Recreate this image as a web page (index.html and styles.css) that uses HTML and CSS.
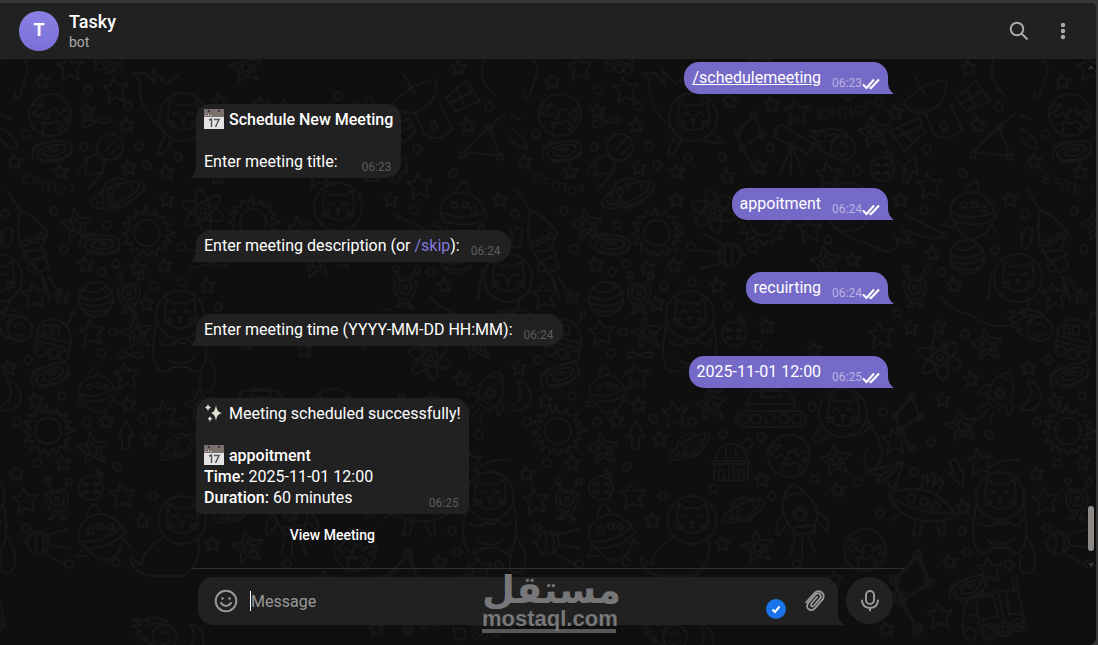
FILE: index.html
```html
<!DOCTYPE html>
<html lang="en">
<head>
    <meta charset="UTF-8">
    <meta name="viewport" content="width=device-width, initial-scale=1.0">
    <title>Tasky</title>
    <link rel="stylesheet" href="styles.css">
</head>
<body>
    <div class="window">
        <!-- space doodles behind the chat -->
        <svg class="wallpaper" aria-hidden="true">
            <defs>
                <path id="star" d="M-2-8L1-3L7-3L3 1L5 7L0 4L-5 7L-4 1L-8-2L-3-3Z"/>
                <path id="bigStar" d="M-3-13L2-5L12-6L6 2L9 11L0 7L-8 13L-6 2L-13-4L-5-5Z"/>
                <g id="doubleStar"><path d="M-3-16L3-7L15-7L7 2L12 13L1 8L-7 15L-7 4L-16-2L-6-5Z"/><path d="M-1-7L2-2L7-2L3 1L5 6L0 4L-4 6L-3 1L-7-1L-3-2Z"/></g>
                <circle id="dot" r="4"/>
                <g id="earth"><circle r="21"/><path d="M-18-9L-8-11L-13-5L-18-2L-13 2L-8-2L-2 4L-1-4L6-6L9 0L15-5L19-2M-8 18L-6 11L-9 8L-4 7L1 9L6 6L13 11L9 14L11 18M14 3l3-2 1 4-3 1z"/></g>
                <g id="banded"><circle r="17"/><path d="M-14-10Q0-2 10-13M-17-3Q0 6 16-6M-17 4Q2 11 17 1M-13 10Q3 16 14 9"/></g>
                <g id="sun"><circle r="13"/><path d="M0-18L-1-27L-5-18L-11-22L-12-15L-20-16L-16-9L-24-10L-18-3L-25 1L-18 4L-23 11L-15 10L-17 19L-10 15L-8 23L-4 18L1 24L4 18L10 22L11 15L20 18L16 9L23 8L18 3L28 0L18-4L23-9L16-10L19-17L11-15L9-22L5-18Z"/></g>
                <g id="galaxy"><path d="M-19 6C-25-5-5-11 12-9C24-7 21 5 9 8C-3 11-16 8-15 2C-14-4 2-7 11-5C18-3 13 3 4 5C-4 6-11 4-7 0C-4-3 3-3 7-1M-19-4q4-5 12-6M-12 10Q10 13 20 3M0 0q3 2 5 0"/></g>
                <g id="saturn"><path d="M-16 3C-17-10-9-17 2-16C13-15 17-8 15 1"/><ellipse rx="28" ry="10"/><path d="M-22-1Q-18 8 3 6Q22 4 23-3M-9 10Q3 17 14 8"/><circle cx="-6" cy="-5" r="3"/><circle cx="3" cy="-9" r="2"/><circle cx="-9" cy="2" r="2"/></g>
                <g id="alien"><path d="M-10-9Q0-16 10-9Q13-3 8 6L4 13L8 17M-10-9Q-13-3-8 6L-4 13L-9 17H-3L-2 13H2L4 18H8M-6-12L-9-19M6-12L10-18M-3 8L0 11L3 7"/><circle r="7" cy="-3"/><circle r="2" cy="-3"/><circle r="3" cx="-9" cy="-21"/><circle r="3" cx="12" cy="-20"/></g>
                <g id="catHead"><circle r="24"/><path d="M-15-3L-13-17L-6-11Q0-14 7-11L14-17L16-2Q16 12 0 13Q-15 12-15-3M-10-2q3-5 6 0M4-2q3-5 6 0M-2 2h4l-2 3zM0 5v3M-17 5l8-1M-16 9l7-2M17 5L9 4M16 9L9 7"/></g>
                <g id="cat"><use href="#catHead"/><path d="M-23 5Q-32 48-20 56Q-12 59-8 52H9Q13 59 20 56Q31 43 23 5M-21 27Q-11 34-3 26L3 29L8 25Q19 34 22 24M-13 44Q0 54 14 43M26 40Q42 62 31 76Q16 81 21 59"/></g>
                <g id="comet"><circle r="12" cx="10" cy="4"/><path d="M15-8Q5-18-9-14L-6-11L-22-14L-14-8L-23-7L-13-2L-20 0L-8 5L-14 6L1 14M-8-7Q0-12 9-8M-3-2L2-6M5 1l5-3 5 4M4 9l5 3 6-4"/></g>
                <g id="rocket"><path d="M-8-30C-21-17-20-2-9 14L15 11C22-5 10-21-8-30ZM-8 14L-6 21L15 18L14 11M-15-2C-26 8-25 17-22 22L-13 9M17-2C28 3 29 9 28 17L18 9M-5 24L-9 40M2 25L2 43M9 24L16 40M-15-16Q-8-22 3-20"/><circle r="7"/><circle r="4"/></g>
                <g id="probe"><path d="M-10-23Q3-19 18 0L10 17L-7 19Q-15 0-10-23ZM-10-23L-23-43M-6 20L-1 29L17 22L12 16M2 29L8 40L19 35L15 24M13 44L20 67M18 43L32 65M12 44L16 60"/><circle r="3" cx="-4" cy="10"/><circle r="3" cx="4" cy="7"/><circle r="3" cx="11" cy="3"/></g>
                <g id="constellation"><path d="M0-25L-17-7L-12 8L-1 27M0-25L8-5L-12 8"/><circle r="3" cy="-25"/><circle r="3" cx="-17" cy="-7"/><circle r="3" cx="-12" cy="8"/><circle r="3" cx="8" cy="-5"/><circle r="3" cy="27"/></g>
                <g id="ufo"><path d="M-34-12Q-4-22 17-8L34 10Q15 21-10 13Q-29 7-34-12ZM-32-7Q0 11 32 8M-21 9L-33 16M-7 15L-10 30L-4 31L0 16M12 17L18 32L23 28L20 15M-2-15L0-30L4-29L4-20L9-32L13-30L9-19L17-26L21-23L14-11"/><circle r="4" cx="-12" cy="-7"/><circle r="4" cx="1" cy="-3"/><circle r="4" cx="13" cy="2"/></g>
                <g id="capsule"><path d="M-23 3Q-22-11-7-15L2-16Q17-13 24 10Q6 21-20 13ZM-8-15Q-5-25 4-27L6-17M-22 4Q-3 14 22 4M-18 14Q-15 27-4 31Q12 31 18 16M-24 13L-31 17L-20 20M19 16L23 25"/><circle r="3" cx="-9" cy="-3"/><circle r="3" cx="2" cy="-3"/><circle r="3" cx="11" cy="1"/></g>
                <g id="cookie"><circle r="12"/><path d="M-8-3q3-4 6 0zM2-3q3-4 6 0zM-8 5q3-5 6 0zM2 5q3-5 6 0z"/><circle r="2" cx="10" cy="-13"/><circle r="2" cx="6" cy="-16"/></g>
                <g id="moon"><path d="M0-16Q17-10 13 6Q7 19-9 12Q11 4 0-16Z"/></g>
                <g id="arrow"><path d="M0-16L8 1L3 0L3 13H-4V0L-8 1Z"/></g>
                <g id="plane"><path d="M-22-2L15-13L5 16L-4 6L-13 10L-9 2ZM-9 2L15-13L-4 6"/></g>
                <g id="atom"><ellipse rx="22" ry="7" transform="rotate(20)"/><ellipse rx="22" ry="7" transform="rotate(80)"/><ellipse rx="22" ry="7" transform="rotate(140)"/><circle r="3"/></g>
                <g id="truck"><path d="M-31 20V5Q-29-12-18-14L0-17L6-19L24-20L31 15M-18-14L-15 15L29 17M-14-12L-1-14L4 7L-12 10M5-15L10 11M12-19L15 4H26M-31 6L-16 5M20-21L18-31L23-32L24-20"/><circle r="8" cx="-4" cy="22"/><circle r="4" cx="-4" cy="22"/><circle r="7" cx="11" cy="19"/><circle r="3" cx="11" cy="19"/><circle r="6" cx="24" cy="15"/><circle r="2" cx="24" cy="15"/><circle r="6" cx="-24" cy="24"/></g>
                <g id="sputnik"><circle r="11"/><path d="M-4-11Q1 0-4 11M4-11Q8 0 4 11M-11 0H-15M9-8L30-14M11 2L32 5M6 10L27 22"/></g>
                <g id="rover"><path d="M-17-3Q-16-18 0-19Q15-17 17 2L15 15M-17-3L16 5M-16 3L15 11M-17-3L-19 10M12-12L18-22"/><rect x="-10" y="-13" width="6" height="9"/><rect x="-1" y="-12" width="6" height="9"/><circle r="5" cx="-13" cy="13"/><circle r="5" cx="-1" cy="16"/><circle r="5" cx="10" cy="18"/><circle r="2" cx="19" cy="-24"/></g>
                <pattern id="doodles" width="510" height="645" patternUnits="userSpaceOnUse">
                    <g class="doodle">
                        <use href="#star" x="43" y="82"/><use href="#star" x="88" y="111"/><use href="#star" x="127" y="125"/>
                        <use href="#star" x="15" y="162"/><use href="#star" x="61" y="172"/><use href="#star" x="129" y="168"/>
                        <use href="#star" x="167" y="172"/><use href="#star" x="167" y="200"/><use href="#star" x="220" y="101"/>
                        <use href="#star" x="262" y="105"/><use href="#star" x="386" y="113"/><use href="#star" x="459" y="68"/>
                        <use href="#star" x="468" y="125"/><use href="#star" x="250" y="167"/><use href="#star" x="218" y="177"/>
                        <use href="#star" x="391" y="200"/><use href="#star" x="500" y="200"/><use href="#star" x="86" y="265"/>
                        <use href="#star" x="138" y="268"/><use href="#star" x="165" y="266"/><use href="#star" x="62" y="297"/>
                        <use href="#star" x="147" y="304"/><use href="#star" x="423" y="253"/><use href="#star" x="343" y="260"/>
                        <use href="#star" x="208" y="286"/><use href="#star" x="445" y="285"/><use href="#star" x="257" y="326"/>
                        <use href="#star" x="401" y="328"/><use href="#star" x="429" y="327"/><use href="#star" x="305" y="350"/>
                        <use href="#star" x="36" y="401"/><use href="#star" x="129" y="405"/><use href="#star" x="107" y="421"/>
                        <use href="#star" x="150" y="439"/><use href="#star" x="63" y="463"/><use href="#star" x="17" y="474"/>
                        <use href="#star" x="143" y="521"/><use href="#star" x="252" y="480"/><use href="#star" x="328" y="490"/>
                        <use href="#star" x="213" y="544"/><use href="#star" x="433" y="400"/><use href="#star" x="462" y="379"/>
                        <use href="#star" x="454" y="507"/><use href="#star" x="440" y="562"/><use href="#star" x="389" y="595"/>
                        <use href="#star" x="377" y="629"/><use href="#star" x="325" y="579"/><use href="#star" x="9" y="368"/>
                        <use href="#bigStar" x="70" y="68"/><use href="#bigStar" x="116" y="90"/><use href="#bigStar" x="287" y="112"/>
                        <use href="#bigStar" x="319" y="175"/><use href="#bigStar" x="420" y="186"/><use href="#bigStar" x="35" y="296"/>
                        <use href="#bigStar" x="92" y="333"/><use href="#bigStar" x="371" y="335"/><use href="#bigStar" x="300" y="230"/>
                        <use href="#bigStar" x="165" y="414"/><use href="#bigStar" x="127" y="376"/><use href="#bigStar" x="26" y="501"/>
                        <use href="#bigStar" x="123" y="496"/><use href="#bigStar" x="385" y="441"/><use href="#bigStar" x="470" y="462"/>
                        <use href="#bigStar" x="480" y="570"/><use href="#bigStar" x="430" y="616"/>
                        <use href="#doubleStar" x="77" y="225"/><use href="#doubleStar" x="364" y="132"/><use href="#doubleStar" x="316" y="262"/>
                        <use href="#doubleStar" x="137" y="333"/><use href="#doubleStar" x="477" y="345"/><use href="#doubleStar" x="201" y="405"/>
                        <use href="#doubleStar" x="93" y="449"/><use href="#doubleStar" x="326" y="460"/><use href="#doubleStar" x="248" y="547"/>
                        <use href="#doubleStar" x="452" y="426"/><use href="#doubleStar" x="246" y="67"/>
                        <use href="#dot" x="88" y="90"/><use href="#dot" x="128" y="106"/><use href="#dot" x="26" y="134"/>
                        <use href="#dot" x="84" y="147"/><use href="#dot" x="139" y="146"/><use href="#dot" x="147" y="165"/>
                        <use href="#dot" x="178" y="157"/><use href="#dot" x="212" y="157"/><use href="#dot" x="260" y="148"/>
                        <use href="#dot" x="5" y="214"/><use href="#dot" x="54" y="211"/><use href="#dot" x="107" y="225"/>
                        <use href="#dot" x="64" y="249"/><use href="#dot" x="116" y="264"/><use href="#dot" x="32" y="268"/>
                        <use href="#dot" x="102" y="272"/><use href="#dot" x="154" y="286"/><use href="#dot" x="181" y="247"/>
                        <use href="#dot" x="182" y="282"/><use href="#dot" x="243" y="249"/><use href="#dot" x="318" y="240"/>
                        <use href="#dot" x="338" y="96"/><use href="#dot" x="369" y="102"/><use href="#dot" x="417" y="149"/>
                        <use href="#dot" x="347" y="171"/><use href="#dot" x="489" y="107"/><use href="#dot" x="453" y="173"/>
                        <use href="#dot" x="414" y="210"/><use href="#dot" x="485" y="250"/><use href="#dot" x="431" y="272"/>
                        <use href="#dot" x="387" y="313"/><use href="#dot" x="455" y="334"/><use href="#dot" x="218" y="307"/>
                        <use href="#dot" x="247" y="345"/><use href="#dot" x="113" y="332"/><use href="#dot" x="101" y="353"/>
                        <use href="#dot" x="28" y="360"/><use href="#dot" x="62" y="396"/><use href="#dot" x="17" y="422"/>
                        <use href="#dot" x="87" y="422"/><use href="#dot" x="143" y="419"/><use href="#dot" x="182" y="422"/>
                        <use href="#dot" x="213" y="434"/><use href="#dot" x="251" y="437"/><use href="#dot" x="302" y="407"/>
                        <use href="#dot" x="373" y="412"/><use href="#dot" x="421" y="442"/><use href="#dot" x="479" y="435"/>
                        <use href="#dot" x="37" y="463"/><use href="#dot" x="117" y="467"/><use href="#dot" x="153" y="496"/>
                        <use href="#dot" x="203" y="489"/><use href="#dot" x="262" y="496"/><use href="#dot" x="305" y="479"/>
                        <use href="#dot" x="348" y="482"/><use href="#dot" x="404" y="472"/><use href="#dot" x="370" y="513"/>
                        <use href="#dot" x="27" y="528"/><use href="#dot" x="116" y="562"/><use href="#dot" x="69" y="564"/>
                        <use href="#dot" x="287" y="564"/><use href="#dot" x="452" y="531"/><use href="#dot" x="457" y="552"/>
                        <use href="#dot" x="499" y="565"/><use href="#dot" x="407" y="631"/>
                        <use href="#earth" x="50" y="115"/><use href="#earth" x="279" y="456"/><use href="#earth" x="355" y="550"/>
                        <use href="#banded" x="96" y="299"/><use href="#banded" x="457" y="257"/>
                        <use href="#sun" x="147" y="233"/><use href="#sun" x="48" y="431"/><use href="#sun" x="253" y="222"/>
                        <use href="#galaxy" transform="translate(52 151) rotate(-5)"/><use href="#galaxy" transform="translate(100 244) rotate(8)"/>
                        <use href="#galaxy" transform="translate(50 375) rotate(-16)"/><use href="#galaxy" transform="translate(458 588) rotate(-20)"/>
                        <use href="#saturn" transform="translate(118 195) rotate(-20)"/><use href="#saturn" transform="translate(234 511) rotate(-25) scale(.8)"/>
                        <use href="#saturn" transform="translate(180 447) rotate(-30) scale(.8)"/>
                        <use href="#alien" x="129" y="296"/><use href="#alien" x="405" y="290"/><use href="#alien" x="57" y="502"/>
                        <use href="#catHead" x="183" y="117"/><path d="M163 130Q135 105 140 80L133 74L145 73L155 84L153 70L166 84L178 75M165 136Q157 151 158 155Q167 154 171 138M193 139Q210 147 213 141L202 133"/>
                        <use href="#cat" x="180" y="315"/><use href="#cat" x="490" y="496"/><use href="#cat" x="-20" y="496"/><use href="#catHead" x="182" y="520"/>
                        <path d="M164 537Q142 550 142 565L130 557Q133 575 153 576H184Q203 563 198 537"/>
                        <use href="#catHead" x="338" y="207"/><path d="M318 219Q333 238 352 242L377 252Q393 247 385 238L403 244L393 230L412 236Q425 242 437 235L395 215"/>
                        <use href="#catHead" x="333" y="413"/><path d="M313 423L302 438L307 443L322 434M337 434L350 435L363 425M357 420Q384 455 362 470Q350 468 357 448"/>
                        <use href="#catHead" x="508" y="278"/><use href="#catHead" x="-2" y="278"/><path d="M430 296Q440 310 460 315Q480 330 500 325L510 320M482 270L478 300M0 320Q8 310 10 298"/>
                        <use href="#comet" x="323" y="144"/><use href="#comet" x="155" y="633"/><use href="#comet" x="10" y="325"/><use href="#comet" x="520" y="325"/>
                        <use href="#probe" x="30" y="233"/><use href="#rocket" x="290" y="514"/><use href="#rocket" transform="translate(490 393) rotate(40) scale(.75)"/>
                        <use href="#constellation" x="244" y="140"/><use href="#constellation" x="402" y="422"/><use href="#constellation" transform="translate(408 590) scale(1.4)"/>
                        <use href="#ufo" x="413" y="505"/><use href="#capsule" x="463" y="208"/><use href="#capsule" transform="translate(100 530) rotate(-20)"/>
                        <use href="#capsule" transform="translate(97 388) rotate(-10) scale(.8)"/>
                        <use href="#cookie" x="372" y="169"/><use href="#cookie" x="224" y="334"/><use href="#cookie" x="91" y="488"/>
                        <use href="#moon" x="7" y="396"/><use href="#moon" x="190" y="640"/>
                        <use href="#arrow" x="126" y="436"/><use href="#arrow" transform="translate(400 170) rotate(22)"/><use href="#arrow" transform="translate(447 472) rotate(160)"/>
                        <use href="#plane" x="379" y="474"/><use href="#atom" x="203" y="211"/><use href="#atom" x="430" y="358"/>
                        <use href="#truck" x="484" y="610"/><use href="#truck" x="-26" y="610"/><use href="#sputnik" x="38" y="543"/><use href="#sputnik" transform="translate(220 255) rotate(180)"/>
                        <use href="#rover" x="54" y="338"/><use href="#rover" transform="translate(110 56) scale(.8)"/>
                        <!-- telescope -->
                        <path d="M266 127L272 125L303 144L298 154L264 137ZM270 126L265 137M281 146V176M281 148L270 174M283 148L293 174"/><circle cx="281" cy="146" r="4"/>
                        <!-- astronaut -->
                        <circle cx="110" cy="147" r="13"/><path d="M106 151L115 139M110 155L120 146M98 154L87 158L77 173M87 158L85 176L103 172L105 162L98 154M103 172L88 190"/>
                        <!-- satellite -->
                        <path d="M393 104Q410 83 436 80Q439 104 415 112Q403 116 393 104ZM404 75L415 94M415 112L424 134Q439 144 452 129L441 105M434 121L430 125L434 132L438 127ZM446 98L466 81L480 101L456 111ZM451 103L473 91M456 87L465 107M380 131L409 118L415 132L395 151ZM389 128L402 141M385 138L413 126"/>
                        <!-- moon rover -->
                        <path d="M236 404L242 391H278L286 404ZM238 405V411M284 405V411"/><rect x="251" y="389" width="20" height="8" rx="3"/><rect x="226" y="411" width="70" height="16" rx="8"/>
                        <circle cx="234" cy="419" r="5"/><circle cx="246" cy="419" r="5"/><circle cx="260" cy="419" r="5"/><circle cx="274" cy="419" r="5"/><circle cx="287" cy="419" r="5"/>
                        <!-- observatory -->
                        <path d="M205 460Q207 445 222 444Q236 445 237 460M202 461H240V464H202ZM204 465V480H238V465M209 479V470H214V479M219 479V467H224V479M229 479V470H234V479M216 460V448M226 460V448M231 444L239 438L243 444L236 451"/>
                        <path d="M463 152L489 127L500 156ZM489 127L504 114"/><circle cx="463" cy="155" r="3"/><circle cx="489" cy="127" r="3"/><circle cx="500" cy="157" r="3"/>
                        <path d="M82 125Q84 117 95 121Q109 126 110 119Q106 115 97 121Q84 131 82 125M117 355Q120 348 129 355Q142 361 144 354Q137 350 129 355Q119 361 117 355M480 467q14-10 30-6M485 55Q475 80 495 95"/>
                        <path d="M0 115L12 120M0 128Q15 135 18 148Q9 150 0 138M0 60Q25 50 28 70L20 95Q12 105 15 92M1 230v15q5 6 9 0l3-15q-5-5-8 0l-4 15"/>
                        <text transform="translate(20 182) rotate(18)">ε=mc²</text>
                        <text transform="translate(307 120) rotate(-6)">ε=mc²</text>
                    </g>
                </pattern>
            </defs>
            <rect width="100%" height="100%" fill="url(#doodles)"/>
        </svg>

        <header class="chat-header">
            <div class="avatar">T</div>
            <div class="chat-info">
                <h1 class="chat-name">Tasky</h1>
                <p class="chat-status">bot</p>
            </div>
            <button class="icon-button" type="button" aria-label="Search">
                <svg width="24" height="24" viewBox="0 0 24 24" fill="none" stroke="currentColor" stroke-width="2"><circle cx="10" cy="10" r="6.300"/><path d="M14.500 14.500L20.500 20.500"/></svg>
            </button>
            <button class="icon-button" type="button" aria-label="More actions">
                <svg width="24" height="24" viewBox="0 0 24 24" fill="currentColor"><circle cx="12" cy="6" r="2.200"/><circle cx="12" cy="12" r="2.200"/><circle cx="12" cy="18" r="2.200"/></svg>
            </button>
        </header>

        <svg class="hidden-defs" width="0" height="0" aria-hidden="true">
            <symbol id="ticks" viewBox="0 0 18 12"><path d="M1 6.500L4.500 10L12 1.500M7.500 9.500L9 10L17 1.500" fill="none" stroke="#fff" stroke-width="2"/></symbol>
            <symbol id="calendar" viewBox="0 0 20 20">
                <path fill="#e4e4e6" d="M0 0h20v20H0z"/><path fill="#7b706e" d="M0 0h20v8H0z"/><path fill="#bdb5b2" d="M1 6h2v1H1zM4 5h1v2H4zM6 6h2v1H6z"/>
                <circle cx="5" cy="2" r="1" fill="#222"/><circle cx="15" cy="2" r="1" fill="#222"/>
                <path d="M5 11L7.500 10V18M10 10.500H15L11.500 18" fill="none" stroke="#555" stroke-width="1.500"/>
            </symbol>
            <symbol id="sparkles" viewBox="0 0 20 20"><path fill="#e3ded6" d="M12 2Q12.500 9 18 10Q12.500 11 12 18Q11 11 7 10Q11 9 12 2ZM4 1Q4.400 4 7 4.500Q4.400 5 4 8Q3.500 5 1 4.500Q3.500 4 4 1ZM6 13Q6.300 15 8.500 15.500Q6.300 16 6 19Q5.500 16 3.500 15.500Q5.500 15 6 13Z"/></symbol>
        </svg>

        <main class="chat">
            <div class="messages">
                <div class="bubble own">
                    <p class="line last"><a class="command" href="#">/schedulemeeting</a>
                        <span class="time">06:23<svg class="ticks"><use href="#ticks"/></svg></span></p>
                </div>
                <div class="bubble">
                    <p class="line"><svg class="emoji"><use href="#calendar"/></svg> <strong>Schedule New Meeting</strong></p>
                    <p class="line"><br></p>
                    <p class="line last">Enter meeting title: <span class="time">06:23</span></p>
                </div>
                <div class="bubble own">
                    <p class="line last">appoitment <span class="time">06:24<svg class="ticks"><use href="#ticks"/></svg></span></p>
                </div>
                <div class="bubble">
                    <p class="line last"><span>Enter meeting description (or <a class="skip" href="#">/skip</a>):</span> <span class="time">06:24</span></p>
                </div>
                <div class="bubble own">
                    <p class="line last">recuirting <span class="time">06:24<svg class="ticks"><use href="#ticks"/></svg></span></p>
                </div>
                <div class="bubble">
                    <p class="line last">Enter meeting time (YYYY-MM-DD HH:MM): <span class="time">06:24</span></p>
                </div>
                <div class="bubble own">
                    <p class="line last">2025-11-01 12:00 <span class="time">06:25<svg class="ticks"><use href="#ticks"/></svg></span></p>
                </div>
                <div class="message-group">
                    <div class="bubble with-keyboard">
                        <p class="line"><svg class="emoji"><use href="#sparkles"/></svg> Meeting scheduled successfully!</p>
                        <p class="line"><br></p>
                        <p class="line"><svg class="emoji"><use href="#calendar"/></svg> <strong>appoitment</strong></p>
                        <p class="line"><strong>Time:</strong> 2025-11-01 12:00</p>
                        <p class="line last"><span><strong>Duration:</strong> 60 minutes</span> <span class="time">06:25</span></p>
                    </div>
                    <button class="view-meeting" type="button">View Meeting</button>
                </div>
            </div>
        </main>

        <footer class="composer">
            <div class="message-box">
                <button class="tool" type="button" aria-label="Emoji">
                    <svg width="24" height="24" viewBox="0 0 24 24" fill="none" stroke="currentColor" stroke-width="2"><circle cx="12" cy="12" r="10.300"/><path d="M7 14q5 6 10 0" stroke-linecap="round"/><circle cx="8.500" cy="9.500" r="1.300" fill="currentColor" stroke="none"/><circle cx="15.500" cy="9.500" r="1.300" fill="currentColor" stroke="none"/></svg>
                </button>
                <input class="message-input" type="text" placeholder="Message" aria-label="Message">
                <button class="tool" type="button" aria-label="Attach">
                    <svg width="24" height="24" viewBox="-1 -1 26 26" fill="none" stroke="currentColor" stroke-width="2" stroke-linecap="round"><path d="M15.500 7.500L9.300 14.700Q8 16.800 9.500 17.700Q10.800 18.300 12 17L18.300 9.500Q20.500 6.500 18.300 4.500Q16 2.700 13.500 5L6 13.800Q2.900 18 6 20.800Q9.500 23.300 13 20L21.500 10"/><path d="M21.500 10Q23.500 6 21.300 3.500Q18 0 13.500 2.500L3.500 13.500" /></svg>
                </button>
                <span class="checked">
                    <svg width="20" height="20" viewBox="0 0 20 20" fill="none" stroke="#fff" stroke-width="2"><path d="M6.500 10.500L9 13L13.500 7.500"/></svg>
                </span>
            </div>
            <button class="voice" type="button" aria-label="Record voice message">
                <svg width="24" height="24" viewBox="0 0 24 24" fill="none" stroke="currentColor" stroke-width="2" stroke-linecap="round"><rect x="8" y="2" width="8" height="13" rx="4"/><path d="M4 11.500q.5 7 8 7.500q7.500-.5 8-7.500M12 19v2.500"/></svg>
            </button>
            <div class="watermark">
                <span class="watermark-ar" lang="ar">مستقل</span>
                <span class="watermark-en">mostaql.com</span>
            </div>
        </footer>

        <div class="scrollbar" aria-hidden="true">
            <span class="scroll-up"></span>
            <span class="scroll-thumb"></span>
            <span class="scroll-down"></span>
        </div>
    </div>
</body>
</html>
```
FILE: styles.css
```css
* {
    box-sizing: border-box;
}

body {
    margin: 0;
    background-color: #363636;
    color: #fff;
    font-family: Roboto, "Liberation Sans", sans-serif;
    font-size: 16px;
    line-height: 21px;
}

h1, p {
    margin: 0;
}

button {
    padding: 0;
    border: none;
    background: none;
    color: #aaa;
    font: inherit;
    cursor: pointer;
}

svg {
    display: block;
}

.window {
    position: relative;
    display: flex;
    flex-direction: column;
    height: 100vh;
    border-top: 3px solid #363636;
    border-right: 2px solid #363636;
    border-radius: 0 8px 8px 0;
    background-color: #0f0f0f;
    overflow: hidden;
}

.wallpaper {
    position: absolute;
    top: -3px;
    left: 0;
    width: 100%;
    height: 100vh;
}

.doodle {
    fill: none;
    stroke: #171717;
    stroke-width: 2;
    stroke-linejoin: round;
    stroke-linecap: round;
}

.doodle text {
    fill: #171717;
    stroke: none;
    font-size: 19px;
}

.hidden-defs {
    position: absolute;
}

/* header */
.chat-header {
    position: relative;
    display: flex;
    align-items: center;
    height: 56px;
    padding: 0 21px 0 19px;
    background-color: #212121;
    gap: 20px;
}

.avatar {
    width: 40px;
    height: 40px;
    border-radius: 50%;
    background: linear-gradient(#8b80e2, #7b70d8);
    font-size: 18px;
    font-weight: 700;
    line-height: 38px;
    text-align: center;
}

.chat-info {
    flex: 1;
    margin-left: -10px;
}

.chat-name {
    font-size: 18px;
    font-weight: 500;
    line-height: 22px;
}

.chat-status {
    color: #aaa;
    font-size: 14px;
    line-height: 18px;
}

.icon-button {
    width: 24px;
    height: 24px;
}

/* messages */
.chat {
    position: relative;
    flex: 1;
    padding: 3px 12px 0 0;
}

.messages {
    display: flex;
    flex-direction: column;
    align-items: flex-start;
    max-width: 692px;
    margin: 0 auto;
    gap: 10px;
}

.bubble {
    position: relative;
    padding: 5px 8px 6px;
    border-radius: 15px 15px 15px 0;
    background-color: #212121;
}

.bubble::after {
    content: "";
    position: absolute;
    bottom: 0;
    left: -6px;
    width: 6px;
    height: 12px;
    background-color: inherit;
    clip-path: path("M6 0Q6 8 0 12H6Z");
}

.bubble.own {
    align-self: flex-end;
    border-radius: 15px 15px 0 15px;
    background-color: #766ac8;
}

.bubble.own::after {
    right: -6px;
    left: auto;
    clip-path: path("M0 0Q0 8 6 12H0Z");
}

.bubble.with-keyboard {
    border-radius: 15px 15px 6px 6px;
}

.bubble.with-keyboard::after {
    display: none;
}

.line.last {
    display: flex;
    align-items: flex-end;
    justify-content: space-between;
    gap: 11px;
}

strong {
    font-weight: 500;
}

.emoji {
    display: inline-block;
    width: 20px;
    height: 20px;
    margin: -1px 1px -1px 0;
    vertical-align: -3px;
}

.command {
    color: #fff;
    text-decoration: underline;
}

.skip {
    color: #8378db;
    text-decoration: none;
}

.time {
    display: flex;
    margin-bottom: -2px;
    padding-right: 2px;
    color: #5c5c5c;
    font-size: 12px;
    line-height: 14px;
}

.own .time {
    padding-right: 0;
    color: #b9b2e2;
}

.ticks {
    width: 18px;
    height: 12px;
    margin-top: 2px;
}

.message-group {
    display: flex;
    flex-direction: column;
}

.view-meeting {
    height: 42px;
    color: #fff;
    font-size: 14px;
    font-weight: 500;
}

/* composer */
.composer {
    position: relative;
    display: flex;
    width: 712px;
    max-width: 100%;
    margin: 0 auto;
    padding: 8px 11px 20px 6px;
    border-top: 1px solid #303030;
    gap: 8px;
}

.message-box {
    position: relative;
    display: flex;
    flex: 1;
    align-items: center;
    height: 48px;
    padding: 0 12px 0 16px;
    border-radius: 15px 15px 0 15px;
    background-color: #212121;
}

.message-box::after {
    content: "";
    position: absolute;
    right: -6px;
    bottom: 0;
    width: 6px;
    height: 12px;
    background-color: #212121;
    clip-path: path("M0 0Q0 8 6 12H0Z");
}

.tool {
    width: 24px;
    height: 24px;
    color: #999;
}

.message-input {
    flex: 1;
    height: 20px;
    margin: 0 12px;
    padding: 0;
    border: none;
    border-left: 1px solid #fff;
    background: none;
    color: #fff;
    font: inherit;
    outline: none;
}

.message-input::placeholder {
    color: #999;
}

.checked {
    position: absolute;
    right: 52px;
    bottom: 6px;
    border-radius: 50%;
    background-color: #1a73e8;
}

.voice {
    display: grid;
    place-items: center;
    width: 47px;
    height: 47px;
    border-radius: 50%;
    background-color: #212121;
    color: #999;
}

.watermark {
    position: absolute;
    top: 2px;
    left: 290px;
    width: 134px;
    color: #77777a;
    text-align: center;
    pointer-events: none;
}

.watermark-ar, .watermark-en {
    display: block;
}

.watermark-ar {
    height: 38px;
    font: 700 38px/38px "DejaVu Sans", sans-serif;
}

.watermark-en {
    border-bottom: 4px solid #58585a;
    font: 700 22px/20px "Liberation Sans", sans-serif;
}

/* scrollbar */
.scrollbar {
    position: absolute;
    top: 62px;
    right: 2px;
    bottom: 78px;
    width: 6px;
}

.scroll-up, .scroll-down {
    position: absolute;
    left: 0;
    border: 3px solid transparent;
}

.scroll-up {
    top: -3px;
    border-bottom: 4px solid #333;
}

.scroll-down {
    bottom: -3px;
    border-top: 4px solid #333;
}

.scroll-thumb {
    position: absolute;
    bottom: 16px;
    width: 6px;
    height: 45px;
    border-radius: 3px;
    background-color: #8d8987;
}
```
